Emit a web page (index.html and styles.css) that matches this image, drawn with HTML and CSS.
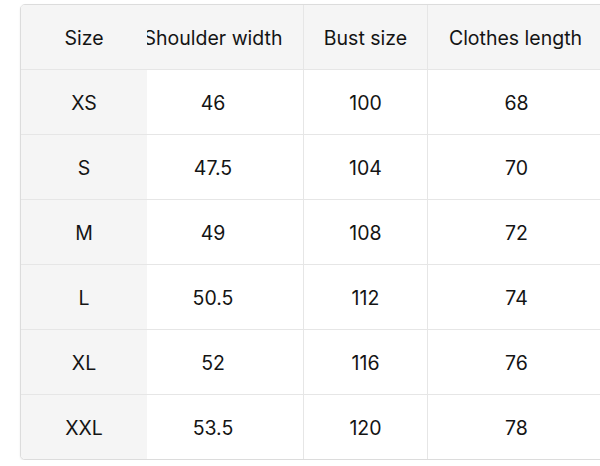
FILE: index.html
```html
<!DOCTYPE html>
<html lang="en">
<head>
<meta charset="utf-8">
<title>Size chart</title>
<link rel="stylesheet" href="styles.css">
</head>
<body>
<div class="chart">
  <div class="row head">
    <div class="cell first">Size</div>
    <div class="cell shift">Shoulder width</div>
    <div class="cell line">Bust size</div>
    <div class="cell line last">Clothes length</div>
  </div>
  <div class="row">
    <div class="cell first">XS</div>
    <div class="cell shift">46</div>
    <div class="cell line">100</div>
    <div class="cell line">68</div>
  </div>
  <div class="row">
    <div class="cell first">S</div>
    <div class="cell shift">47.5</div>
    <div class="cell line">104</div>
    <div class="cell line">70</div>
  </div>
  <div class="row">
    <div class="cell first">M</div>
    <div class="cell shift">49</div>
    <div class="cell line">108</div>
    <div class="cell line">72</div>
  </div>
  <div class="row">
    <div class="cell first">L</div>
    <div class="cell shift">50.5</div>
    <div class="cell line">112</div>
    <div class="cell line">74</div>
  </div>
  <div class="row">
    <div class="cell first">XL</div>
    <div class="cell shift">52</div>
    <div class="cell line">116</div>
    <div class="cell line">76</div>
  </div>
  <div class="row">
    <div class="cell first">XXL</div>
    <div class="cell shift">53.5</div>
    <div class="cell line">120</div>
    <div class="cell line">78</div>
  </div>
</div>
</body>
</html>
```

FILE: styles.css
```css
html, body {
  margin: 0;
  padding: 0;
  background: #ffffff;
  overflow: hidden;
}

body {
  padding: 4px 0 0 20px;
  font-family: Inter, "Liberation Sans", sans-serif;
  font-size: 19.5px;
  color: #141414;
}

.chart {
  width: 584px;
  border: 1px solid #dcdcdc;
  border-radius: 5px;
  overflow: hidden;
  box-shadow: 0 1px 2px rgba(0, 0, 0, 0.08);
  background: #ffffff;
}

.row {
  display: grid;
  grid-template-columns: 126px 156px 124px 1fr;
  height: 64px;
  border-bottom: 1px solid #e6e6e6;
}

.row:last-child {
  border-bottom: none;
}

.head {
  background: #f5f5f5;
}

.cell {
  display: flex;
  align-items: center;
  justify-content: center;
  overflow: hidden;
  white-space: nowrap;
  padding-top: 2px;
}

.first {
  background: #f5f5f5;
}

.shift {
  padding-right: 24px;
}

.line {
  border-left: 1px solid #e6e6e6;
}

.last {
  padding-right: 2px;
}
```
